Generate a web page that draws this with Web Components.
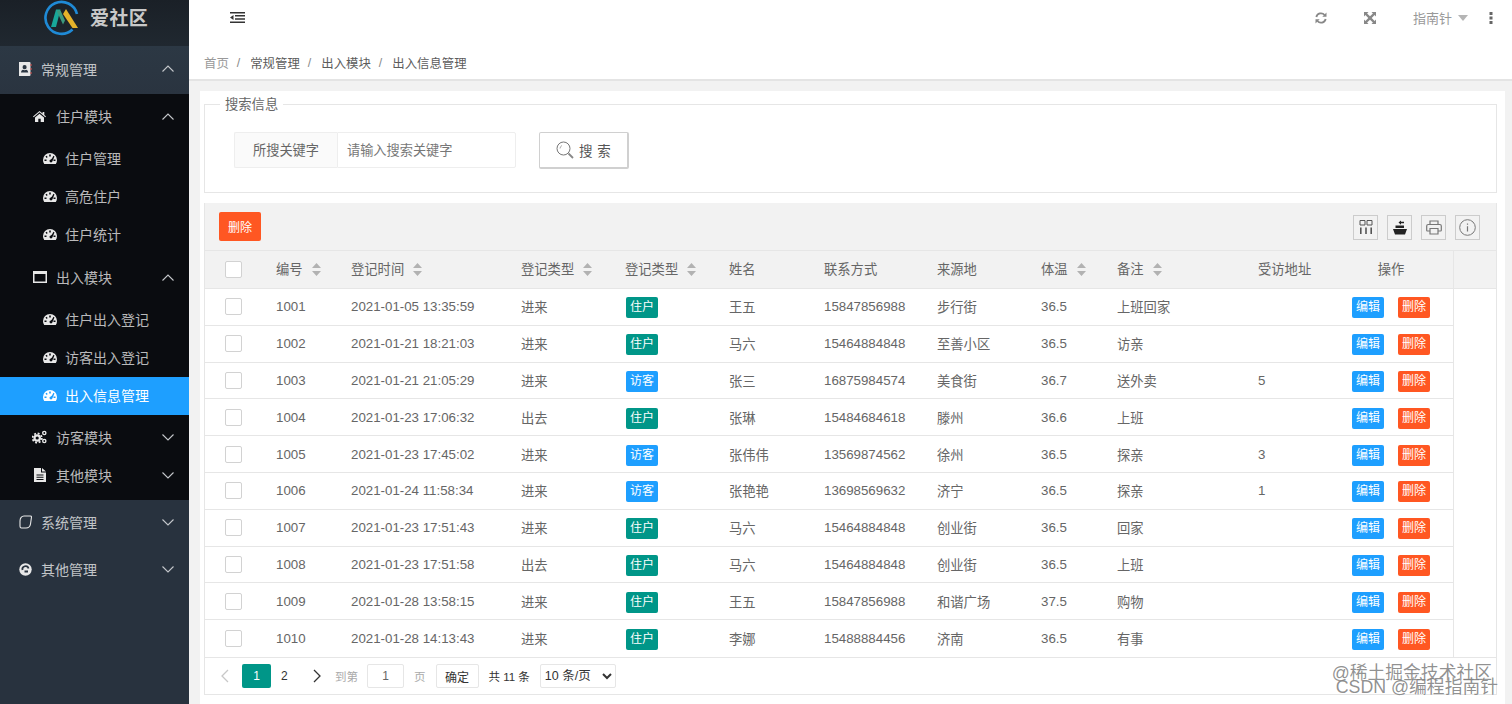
<!DOCTYPE html>
<html lang="zh">
<head>
<meta charset="utf-8">
<title>爱社区</title>
<style>
  html, body { margin: 0; height: 704px; overflow: hidden; background: #f2f2f2; }
  body { display: flex; font-family: "Liberation Sans", "Noto Sans CJK SC", sans-serif; }
</style>
</head>
<body>
<side-nav></side-nav>
<main-area>
  <top-bar></top-bar>
  <bread-crumb></bread-crumb>
  <page-card>
    <search-panel></search-panel>
    <data-table></data-table>
  </page-card>
</main-area>
<water-mark></water-mark>
<script>
const svg = (w, h, vb, body) => `<svg width="${w}" height="${h}" viewBox="${vb}" aria-hidden="true">${body}</svg>`;

const ICONS = {
  book: svg(14, 14, "0 0 14 14", `<path fill="currentColor" d="M1 0h10.500a1 1 0 0 1 1 1v12a1 1 0 0 1-1 1H1z"/><path fill="#2b3642" d="M6.600 3a2 2 0 0 1 2 2.200c0 1-.6 2-2 2s-2-1-2-2A2 2 0 0 1 6.600 3zM3 10.600c0-1.800 1.200-2.600 2-2.800.4.300 1 .5 1.600.5s1.200-.2 1.600-.5c.8.200 2 1 2 2.800z"/><path fill="#d9534f" d="M12.500 2h1v2h-1zM12.500 6h1v2h-1zM12.500 10h1v2h-1z"/>`),
  home: svg(13, 11, "0 0 13 11", `<path fill="currentColor" d="M6.500 0 9.600 2.600V1h1.700v3l1.700 1.500-.7.800L6.500 1.300.7 6.300 0 5.500zM2 6.500l4.500-3.800L11 6.500V11H7.700V7.800H5.300V11H2z"/>`),
  gauge: svg(14, 11, "0 0 14 11", `<path fill="currentColor" fill-rule="evenodd" d="M7 0a7 7 0 0 1 7 7c0 1.500-.4 2.900-1.200 4H1.200A7 7 0 0 1 0 7a7 7 0 0 1 7-7zM6.200 1.500v2h1.600v-2zM2.500 3.600 3.700 5l1-1-1.200-1.300zM11.500 3.600 10.400 2.700 9 5.600 7.800 6.400A1.500 1.500 0 1 0 9.500 8zM1.500 6.500v1.600h2V6.500zM10.500 6.500v1.600h2V6.500z"/>`),
  win: svg(14, 12, "0 0 14 12", `<path fill="currentColor" fill-rule="evenodd" d="M0 0h14v12H0zM1.500 3v7.500h11V3z"/>`),
  cogs: svg(15, 14, "0 0 15 14", `<g fill="none" stroke="currentColor"><circle cx="5.200" cy="8" r="2.700" stroke-width="2.200"/><circle cx="5.200" cy="8" r="4.600" stroke-width="1.800" stroke-dasharray="1.900 1.700"/><circle cx="12.300" cy="3" r="1.600" stroke-width="1.400"/><circle cx="12.300" cy="11" r="1.600" stroke-width="1.400"/></g>`),
  file: svg(12, 14, "0 0 12 14", `<path fill="currentColor" fill-rule="evenodd" d="M0 0h7v4.500h5V14H0zM8 0l4 3.600H8zM2.500 6.500v1h7v-1zM2.500 8.700v1h7v-1zM2.500 10.900v1h7v-1z"/>`),
  leaf: svg(13, 14, "0 0 13 14", `<path fill="none" stroke="currentColor" stroke-width="1.100" d="M5 1h6.500c.7 0 1 .4 1 1l-1 7c-.4 2.500-2 4-4.500 4H2.500C1.500 13 1 12.300 1 11.200V6C1 3 2.700 1 5 1z"/>`),
  orb: svg(13, 13, "0 0 13 13", `<circle cx="6.500" cy="6.500" r="6.200" fill="currentColor"/><path fill="none" stroke="#29333f" stroke-width="1.800" d="M3.500 7a3 3 0 0 1 6-1.500M9 8.500H5.500"/>`),
  up: svg(12, 7, "0 0 12 7", `<path fill="none" stroke="currentColor" stroke-width="1.100" d="M.5 6.500 6 1l5.500 5.500"/>`),
  down: svg(12, 7, "0 0 12 7", `<path fill="none" stroke="currentColor" stroke-width="1.100" d="M.5.500 6 6l5.500-5.500"/>`),
  outdent: svg(15, 11, "0 0 15 11", `<path fill="#333" d="M0 0h15v1.600H0zM5 3h10v1.600H5zM5 6.200h10v1.600H5zM0 9.400h15V11H0zM3.500 3v5L0 5.500z"/>`),
  refresh: svg(12, 12, "0 0 12 12", `<g fill="none" stroke="#888" stroke-width="1.800"><path d="M1.300 5a4.800 4.800 0 0 1 8.300-2"/><path d="M10.700 7a4.800 4.800 0 0 1-8.300 2"/></g><path fill="#888" d="M11.500.5v4.200H7.300zM.5 11.500V7.300h4.200z"/>`),
  full: svg(12, 12, "0 0 12 12", `<path fill="#888" d="M0 0h4.500L3.100 1.400 6 4.300 8.900 1.400 7.500 0H12v4.500L10.600 3.100 7.700 6l2.900 2.900L12 7.500V12H7.500l1.400-1.400L6 7.700l-2.900 2.900L4.500 12H0V7.500l1.400 1.400L4.300 6 1.400 3.100 0 4.500z"/>`),
  dots: svg(4, 12, "0 0 4 12", `<path fill="#666" d="M.5 0h3v3h-3zM.5 4.500h3v3h-3zM.5 9h3v3h-3z"/>`),
  search: svg(18, 18, "0 0 18 18", `<circle cx="7.500" cy="7.500" r="6.500" fill="none" stroke="#777"/><path fill="none" stroke="#aaa" d="M4 7.500a3.500 3.500 0 0 1 2-3"/><path fill="none" stroke="#888" stroke-width="1.800" d="m12.500 12.500 4.500 4.500"/>`),
  cols: svg(14, 14, "0 0 14 14", `<path fill="none" stroke="#555" d="M1 .5h5v4.500H1zM8 .5h5v4.500H8z"/><path fill="#555" d="M1 7.500h1.600V14H1zM6.200 7.500h1.600V14H6.200zM11.400 7.500H13V14h-1.600z"/>`),
  ship: svg(16, 15, "0 0 16 15", `<path fill="#222" d="M1 9h14l-2 5.500H3zM3.500 5.500H12V8H3.500zM6.500 2.500 9 .5v1.300h3V3.300H9v1.500z"/>`),
  print: svg(16, 15, "0 0 16 15", `<g fill="none" stroke="#777" stroke-width="1.200"><path d="M4 4.500V1h8v3.500"/><path d="M4 11H1.500c-.5 0-.8-.3-.8-.8V6c0-.9.600-1.500 1.500-1.500h11.600c.9 0 1.500.6 1.500 1.500v4.200c0 .5-.3.800-.8.800H12"/><path d="M4 8.500h8v5.500H4z"/></g>`),
  info: svg(17, 17, "0 0 17 17", `<circle cx="8.500" cy="8.500" r="7.800" fill="none" stroke="#777"/><path fill="#777" d="M7.900 7.200h1.200v5.300H7.900zM7.900 4.500h1.200v1.300H7.900z"/>`),
  sort: svg(9, 13, "0 0 9 13", `<path fill="#b2b2b2" d="M4.500 0 9 5H0zM0 8h9l-4.500 5z"/>`),
  left: svg(9, 14, "0 0 9 14", `<path fill="none" stroke="#c8c8c8" stroke-width="1.300" d="M8 1 2 7l6 6"/>`),
  right: svg(9, 14, "0 0 9 14", `<path fill="none" stroke="#333" stroke-width="1.300" d="m1 1 6 6-6 6"/>`),
};

class SideNav extends HTMLElement {
  constructor() {
    super();
    this.attachShadow({ mode: "open" });
  }

  getStyles() {
    return `
      <style>
        :host {
          display: block;
          flex: 0 0 189px;
          width: 189px;
          height: 704px;
          background: #28323e;
          color: rgba(255, 255, 255, .72);
          font-size: 14px;
        }
        .logo {
          height: 46px;
          display: flex;
          align-items: flex-start;
          background: linear-gradient(#1a2027, #202830);
          padding-left: 43px;
          box-sizing: border-box;
        }
        .logo b {
          font-size: 19px;
          line-height: 38px;
          margin-left: 10px;
          color: #c9c9c9;
          letter-spacing: .4px;
        }
        .row {
          display: flex;
          align-items: center;
          box-sizing: border-box;
          padding-bottom: 2px;
        }
        .row .ico {
          display: flex;
          justify-content: center;
          align-items: center;
          color: #e8e8e8;
        }
        .row .txt { flex: 1; }
        .row .arr { display: flex; margin-right: 15px; color: #c5c8cc; }
        .group {
          height: 47px;
          padding-left: 18px;
          padding-bottom: 3px;
        }
        .group .ico { width: 14px; margin-right: 9px; }
        .open { background: linear-gradient(#2c3844, #2a3440); height: 48px; }
        .sub {
          background: #0a0c10;
          padding: 4px 0 5px;
        }
        .sub-head {
          height: 38px;
          padding-left: 32px;
        }
        .sub-head .ico { width: 15px; margin-right: 9px; }
        .list { margin: 4px 0 5px; }
        .list.end { margin-bottom: 4px; }
        .item {
          height: 38px;
          padding-left: 42px;
        }
        .item .ico { width: 15px; margin-right: 8px; }
        .item.on { background: #1e9fff; color: #fff; }
        .item.on .ico { color: #fff; }
      </style>
    `;
  }

  getTemplate() {
    const template = document.createElement("template");
    const item = (t, on) => `<div class="row item ${on ? "on" : ""}"><span class="ico">${ICONS.gauge}</span><span class="txt">${t}</span></div>`;
    const head = (ic, t, dir) => `<div class="row sub-head"><span class="ico">${ICONS[ic]}</span><span class="txt">${t}</span><span class="arr">${ICONS[dir]}</span></div>`;
    const group = (ic, t, dir, cls = "") => `<div class="row group ${cls}"><span class="ico">${ICONS[ic]}</span><span class="txt">${t}</span><span class="arr">${ICONS[dir]}</span></div>`;

    template.innerHTML = `
      ${this.getStyles()}
      <div class="logo">
        ${svg(37, 38, "0 0 37 38", `
          <path fill="none" stroke="#1f8ad6" stroke-width="2.600" d="M29.500 29.500A16 16 0 1 1 34 14"/>
          <path fill="#18a79a" d="M8 27 13 9.500h4.500L13 27z"/>
          <path fill="#3c9a7e" d="M13.500 10.500h4l4.500 10-2 4z"/>
          <path fill="#e5b32a" d="M20 14l3-5 12 19h-5.500z"/>
        `)}
        <b>爱社区</b>
      </div>
      ${group("book", "常规管理", "up", "open")}
      <div class="sub">
        ${head("home", "住户模块", "up")}
        <div class="list">${item("住户管理")}${item("高危住户")}${item("住户统计")}</div>
        ${head("win", "出入模块", "up")}
        <div class="list end">${item("住户出入登记")}${item("访客出入登记")}${item("出入信息管理", true)}</div>
        ${head("cogs", "访客模块", "down")}
        ${head("file", "其他模块", "down")}
      </div>
      ${group("leaf", "系统管理", "down")}
      ${group("orb", "其他管理", "down")}
    `;
    return template;
  }

  connectedCallback() {
    this.shadowRoot.appendChild(this.getTemplate().content.cloneNode(true));
  }
}

class MainArea extends HTMLElement {
  constructor() {
    super();
    this.attachShadow({ mode: "open" });
    this.shadowRoot.innerHTML = `
      <style>
        :host { display: flex; flex-direction: column; flex: 1; min-width: 0; height: 704px; }
      </style>
      <slot></slot>
    `;
  }
}

class TopBar extends HTMLElement {
  constructor() {
    super();
    this.attachShadow({ mode: "open" });
    this.shadowRoot.innerHTML = `
      <style>
        :host {
          display: flex;
          align-items: center;
          background: #fff;
          flex: 0 0 45px;
          box-sizing: border-box;
          padding: 0 19px 10px 41px;
          color: #999;
          font-size: 13px;
        }
        span { display: flex; align-items: center; }
        .grow { flex: 1; }
        .a { margin-right: 37px; }
        .b { margin-right: 6px; }
        .caret {
          width: 0; height: 0;
          border: 5px solid transparent;
          border-top: 6px solid #b5b5b5;
          border-bottom: 0;
          margin-right: 21px;
        }
      </style>
      <span>${ICONS.outdent}</span>
      <span class="grow"></span>
      <span class="a">${ICONS.refresh}</span>
      <span class="a">${ICONS.full}</span>
      <span class="b">指南针</span>
      <span class="caret"></span>
      <span>${ICONS.dots}</span>
    `;
  }
}

class BreadCrumb extends HTMLElement {
  constructor() {
    super();
    this.attachShadow({ mode: "open" });
    const parts = ["首页", "常规管理", "出入模块", "出入信息管理"];
    this.shadowRoot.innerHTML = `
      <style>
        :host {
          display: flex;
          align-items: center;
          flex: 0 0 36px;
          box-sizing: border-box;
          background: #fff;
          border-bottom: 2px solid #e4e4e4;
          padding: 2px 0 0 15px;
          font-size: 12.400px;
          color: #5c5c5c;
        }
        i { font-style: normal; color: #888; margin: 0 10px 0 8px; }
        .home { color: #999; }
      </style>
      ${parts.map((p, n) => `<span class="${n ? "" : "home"}">${p}</span>`).join("<i>/</i>")}
    `;
  }
}

class PageCard extends HTMLElement {
  constructor() {
    super();
    this.attachShadow({ mode: "open" });
    this.shadowRoot.innerHTML = `
      <style>
        :host {
          display: block;
          flex: 1;
          background: #fff;
          margin: 10px 7px 0 11px;
          padding: 5px 8px 0 4px;
          box-sizing: border-box;
        }
      </style>
      <slot></slot>
    `;
  }
}

class SearchPanel extends HTMLElement {
  constructor() {
    super();
    this.attachShadow({ mode: "open" });
    this.shadowRoot.innerHTML = `
      <style>
        :host { display: block; color: #666; font-size: 13.200px; }
        fieldset {
          margin: 0;
          padding: 0 0 0 29px;
          height: 97px;
          box-sizing: border-box;
          border: 1px solid #e6e6e6;
        }
        legend { margin-left: -14px; padding: 0 5px; line-height: 17px; color: #666; font-size: 13.300px; }
        .line { display: flex; margin-top: 19px; }
        .label {
          width: 103px; height: 36px;
          box-sizing: border-box;
          display: flex; align-items: center; justify-content: center;
          border: 1px solid #eee;
          border-right: 0;
          border-radius: 2px 0 0 2px;
          background: #fafafa;
          padding-bottom: 2px;
        }
        .input {
          width: 179px; height: 36px;
          box-sizing: border-box;
          display: flex; align-items: center;
          padding: 0 0 2px 9px;
          border: 1px solid #eee;
          border-radius: 0 2px 2px 0;
          color: #777;
        }
        .btn {
          margin-left: 23px;
          width: 90px; height: 37px;
          box-sizing: border-box;
          display: flex; align-items: center; justify-content: center;
          gap: 5px;
          border: 1px solid #d0d0d0;
          border-width: 1px 2px 2px 1px;
          border-radius: 2px;
          background: #fff;
          color: #555;
          font-size: 13.500px;
          word-spacing: 1px;
        }
      </style>
      <fieldset>
        <legend>搜索信息</legend>
        <div class="line">
          <div class="label">所搜关键字</div>
          <div class="input">请输入搜索关键字</div>
          <div class="btn">${ICONS.search}<span>搜 索</span></div>
        </div>
      </fieldset>
    `;
  }
}

const ROWS = [
  ["1001", "2021-01-05 13:35:59", "进来", "住户", "王五", "15847856988", "步行街", "36.5", "上班回家", ""],
  ["1002", "2021-01-21 18:21:03", "进来", "住户", "马六", "15464884848", "至善小区", "36.5", "访亲", ""],
  ["1003", "2021-01-21 21:05:29", "进来", "访客", "张三", "16875984574", "美食街", "36.7", "送外卖", "5"],
  ["1004", "2021-01-23 17:06:32", "出去", "住户", "张琳", "15484684618", "滕州", "36.6", "上班", ""],
  ["1005", "2021-01-23 17:45:02", "进来", "访客", "张伟伟", "13569874562", "徐州", "36.5", "探亲", "3"],
  ["1006", "2021-01-24 11:58:34", "进来", "访客", "张艳艳", "13698569632", "济宁", "36.5", "探亲", "1"],
  ["1007", "2021-01-23 17:51:43", "进来", "住户", "马六", "15464884848", "创业街", "36.5", "回家", ""],
  ["1008", "2021-01-23 17:51:58", "出去", "住户", "马六", "15464884848", "创业街", "36.5", "上班", ""],
  ["1009", "2021-01-28 13:58:15", "进来", "住户", "王五", "15847856988", "和谐广场", "37.5", "购物", ""],
  ["1010", "2021-01-28 14:13:43", "进来", "住户", "李娜", "15488884456", "济南", "36.5", "有事", ""],
];

const COLS = [
  [56, ""], [75, "编号", 1], [170, "登记时间", 1], [104, "登记类型", 1], [104, "登记类型", 1],
  [95, "姓名"], [113, "联系方式"], [104, "来源地"], [76, "体温", 1], [141, "备注", 1],
  [86, "受访地址"], [124, "操作"],
];

class DataTable extends HTMLElement {
  constructor() {
    super();
    this.attachShadow({ mode: "open" });
  }

  getStyles() {
    return `
      <style>
        :host {
          display: block;
          margin-top: 10px;
          border: 1px solid #e6e6e6;
          border-top: 0;
          color: #666;
          font-size: 13.300px;
        }
        .tools {
          height: 48px;
          box-sizing: border-box;
          background: #f2f2f2;
          border-bottom: 1px solid #e6e6e6;
          display: flex;
          align-items: center;
          padding: 0 16px 0 14px;
          gap: 9px;
        }
        .danger {
          margin-right: auto;
          width: 42px; height: 29px;
          border-radius: 2px;
          background: #ff5722;
          color: #fff;
          font-size: 12px;
          display: flex; align-items: center; justify-content: center;
        }
        .tool {
          width: 25px; height: 25px;
          box-sizing: border-box;
          border: 1px solid #ccc;
          display: flex; align-items: center; justify-content: center;
          margin-top: 1px;
        }
        .head { background: #f2f2f2; border-bottom: 1px solid #e6e6e6; }
        .body { height: 368px; }
        table {
          table-layout: fixed;
          border-collapse: separate;
          border-spacing: 0;
          width: 1248px;
        }
        th, td {
          padding: 0 0 0 15px;
          text-align: left;
          font-weight: 400;
          overflow: hidden;
          white-space: nowrap;
          border-right: 0;
        }
        .head table { border-right: 1px solid #e6e6e6; }
        .head th { height: 37px; box-sizing: border-box; padding-bottom: 2px; }
        .head th:first-child { padding-bottom: 0; }
        .body table { border-right: 1px solid #e6e6e6; }
        .body td { height: 36.800px; box-sizing: border-box; border-bottom: 1px solid #e6e6e6; }
        .body tr:last-child td { border-bottom: 0; }
        th:last-child, td:last-child { text-align: center; padding-left: 0; }
        .body td.tagged { padding-top: 2px; }
        th:first-child, td:first-child { padding-left: 20px; }
        th svg { vertical-align: -2px; margin-left: 9px; }
        .check {
          display: block;
          width: 17px; height: 17px;
          box-sizing: border-box;
          background: #fff;
          border: 1px solid #d2d2d2;
          border-radius: 2px;
        }
        .tag, .mini {
          display: inline-block;
          width: 32px; height: 21px;
          line-height: 21px;
          text-align: center;
          border-radius: 2px;
          color: #fff;
          font-size: 12px;
        }
        .tag { margin-left: 1px; }
        .green { background: #009688; }
        .blue { background: #1e9fff; }
        .mini.red { background: #ff5722; margin-left: 14px; }
      </style>
    `;
  }

  getTemplate() {
    const template = document.createElement("template");
    const cols = `<colgroup>${COLS.map(c => `<col style="width:${c[0]}px">`).join("")}</colgroup>`;
    const heads = COLS.map((c, n) => `<th>${n ? c[1] : `<span class="check"></span>`}${c[2] ? ICONS.sort : ""}</th>`).join("");
    const rows = ROWS.map(r => `
      <tr>
        <td><span class="check"></span></td>
        <td>${r[0]}</td><td>${r[1]}</td><td>${r[2]}</td>
        <td class="tagged"><span class="tag ${r[3] === "住户" ? "green" : "blue"}">${r[3]}</span></td>
        <td>${r[4]}</td><td>${r[5]}</td><td>${r[6]}</td><td>${r[7]}</td><td>${r[8]}</td><td>${r[9]}</td>
        <td class="tagged"><span class="mini blue">编辑</span><span class="mini red">删除</span></td>
      </tr>`).join("");

    template.innerHTML = `
      ${this.getStyles()}
      <div class="tools">
        <div class="danger">删除</div>
        <div class="tool">${ICONS.cols}</div>
        <div class="tool">${ICONS.ship}</div>
        <div class="tool">${ICONS.print}</div>
        <div class="tool">${ICONS.info}</div>
      </div>
      <div class="head"><table>${cols}<tr>${heads}</tr></table></div>
      <div class="body"><table>${cols}${rows}</table></div>
      <page-bar></page-bar>
    `;
    return template;
  }

  connectedCallback() {
    this.shadowRoot.appendChild(this.getTemplate().content.cloneNode(true));
  }
}

class PageBar extends HTMLElement {
  constructor() {
    super();
    this.attachShadow({ mode: "open" });
    this.shadowRoot.innerHTML = `
      <style>
        :host {
          display: flex;
          align-items: center;
          height: 37px;
          box-sizing: border-box;
          border-top: 1px solid #e6e6e6;
          padding-left: 15px;
          font-size: 11.500px;
          color: #333;
        }
        .cur {
          width: 29px; height: 24px;
          line-height: 24px;
          text-align: center;
          background: #009688;
          color: #fff;
          border-radius: 2px;
          margin-left: 13px;
          font-size: 12px;
        }
        .n { margin-left: 10px; width: 9px; font-size: 12px; }
        .next { margin-left: 23px; display: flex; }
        .prev { display: flex; }
        .mute { color: #aaa; }
        .box {
          height: 24px;
          box-sizing: border-box;
          border: 1px solid #e6e6e6;
          border-radius: 2px;
          display: flex; align-items: center; justify-content: center;
        }
        .num { width: 37px; margin: 0 10px 0 9px; color: #666; font-size: 12px; }
        .ok { width: 43px; margin: 0 10px; font-size: 12px; }
        select {
          margin-left: 11px;
          width: 76px; height: 24px;
          border: 1px solid #e6e6e6;
          border-radius: 2px;
          background: #fff;
          color: #333;
          font: 12.500px "Liberation Sans", "Noto Sans CJK SC", sans-serif;
        }
      </style>
      <span class="prev">${ICONS.left}</span>
      <span class="cur">1</span>
      <span class="n">2</span>
      <span class="next">${ICONS.right}</span>
      <span class="mute" style="margin-left:13px">到第</span>
      <span class="box num">1</span>
      <span class="mute">页</span>
      <span class="box ok">确定</span>
      <span>共 11 条</span>
      <select style="margin-left:10px"><option>10 条/页</option></select>
    `;
  }
}

class WaterMark extends HTMLElement {
  constructor() {
    super();
    this.attachShadow({ mode: "open" });
    this.shadowRoot.innerHTML = `
      <style>
        :host {
          position: absolute;
          right: 14px;
          top: 666px;
          font-size: 17.800px;
          line-height: 14px;
          color: rgba(70, 70, 70, .6);
          text-align: right;
          white-space: nowrap;
          text-shadow: 0 0 1px rgba(255, 255, 255, .8);
        }
        .first { margin-right: 6px; }
      </style>
      <div class="first">@稀土掘金技术社区</div>
      <div>CSDN @编程指南针</div>
    `;
  }
}

customElements.define("side-nav", SideNav);
customElements.define("main-area", MainArea);
customElements.define("top-bar", TopBar);
customElements.define("bread-crumb", BreadCrumb);
customElements.define("page-card", PageCard);
customElements.define("search-panel", SearchPanel);
customElements.define("data-table", DataTable);
customElements.define("page-bar", PageBar);
customElements.define("water-mark", WaterMark);
</script>
</body>
</html>
